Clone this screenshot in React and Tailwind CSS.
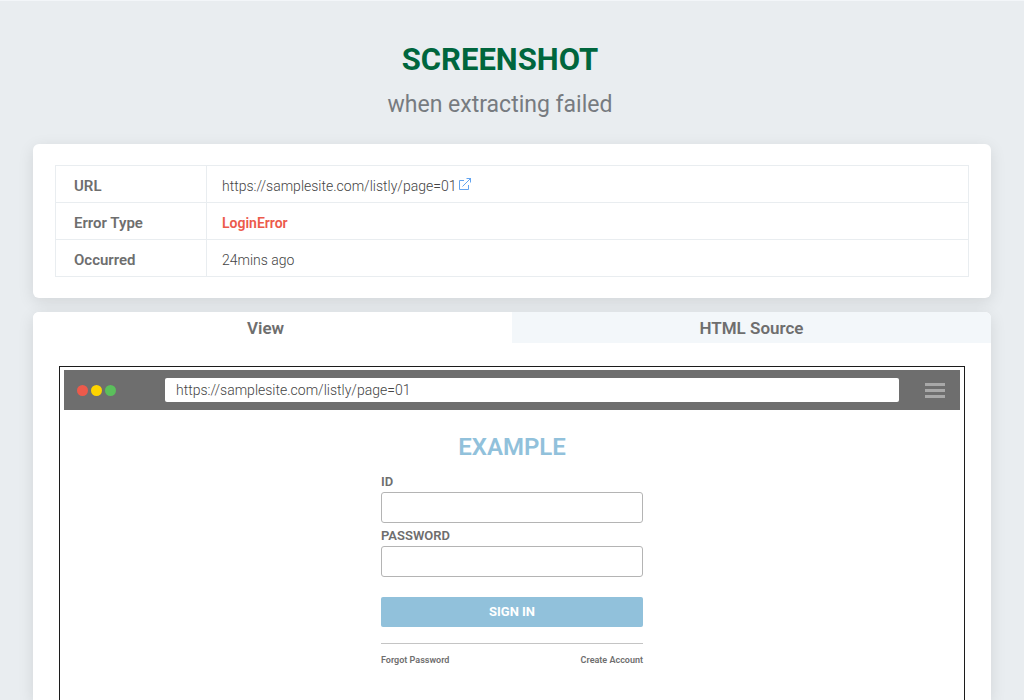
import { useState } from 'react';

const SAMPLE_URL = 'https://samplesite.com/listly/page=01';

function ExternalIcon() {
    return (
        <svg className="w-3.5 h-3.5 mb-1" viewBox="0 0 14 14" fill="none" stroke="#64a5f0" aria-hidden="true">
            <path d="M6 3.5H1.5v9h9V8" />
            <path d="M4.5 9.5L13 1M8.5 1.5h4v4" />
        </svg>
    );
}

function InfoRow({ label, children }) {
    return (
        <tr className="h-[37px]">
            <th scope="row" className="w-[151px] pl-[18px] pt-[3px] text-left text-[15px] leading-5 font-semibold border border-[#e9edf0]">{label}</th>
            <td className="pl-[15px] pt-[3px] border border-[#e9edf0]">{children}</td>
        </tr>
    );
}

function Field({ id, label, type }) {
    return (
        <div className="flex flex-col mb-px">
            <label htmlFor={id} className="h-[22px] pt-px leading-[22px] text-[13px] font-semibold">{label}</label>
            <input id={id} type={type} className="h-[31px] w-full px-2 rounded-[3px] border border-[#b4b4b4] bg-white text-sm" />
        </div>
    );
}

function LoginForm() {
    return (
        <form className="w-[262px] mx-auto" onSubmit={(e) => e.preventDefault()}>
            <h2 className="mt-[21px] mb-[7px] h-8 leading-8 text-2xl font-semibold text-center text-[#91c1db]">EXAMPLE</h2>
            <Field id="login-id" label="ID" type="text" />
            <Field id="login-password" label="PASSWORD" type="password" />
            <button type="submit" className="mt-[19px] w-full h-[30px] rounded-[2px] bg-[#91c1db] text-[13px] font-bold text-white">
                SIGN IN
            </button>
            <div className="mt-4 pt-2 border-t border-[#c4c4c4] flex justify-between text-[9px] leading-4 font-semibold">
                <a href="#forgot">Forgot Password</a>
                <a href="#create">Create Account</a>
            </div>
        </form>
    );
}

function BrowserPreview() {
    return (
        <div className="flex-1 mt-[23px] mx-[26px] px-1 pt-[3px] border-x border-t border-[#1c1c1c]">
            {/* Browser bar */}
            <div className="h-10 px-[13px] bg-[#6e6e6e] flex items-center">
                <div className="flex gap-[3px]">
                    <span className="w-[11px] h-[11px] rounded-full bg-[#ec5a4b]"></span>
                    <span className="w-[11px] h-[11px] rounded-full bg-[#fdd400]"></span>
                    <span className="w-[11px] h-[11px] rounded-full bg-[#5bbf5c]"></span>
                </div>
                <input
                    type="text"
                    readOnly
                    aria-label="Address"
                    value={SAMPLE_URL}
                    className="flex-1 min-w-0 ml-[49px] mr-[26px] h-6 px-[11px] rounded-[2px] bg-white text-sm font-light text-[#444]"
                />
                <button type="button" aria-label="Menu" className="w-5 mr-0.5 flex flex-col gap-[3px]">
                    <span className="h-[3px] bg-[#a8a8a8]"></span>
                    <span className="h-[3px] bg-[#a8a8a8]"></span>
                    <span className="h-[3px] bg-[#a8a8a8]"></span>
                </button>
            </div>
            <LoginForm />
        </div>
    );
}

export default function App() {
    const [tab, setTab] = useState('view');

    return (
        <div className="min-h-screen flex flex-col px-[33px] bg-[#e9edf0] border-t border-[#f3f6f9] text-[#6e6e6e] font-['Roboto',sans-serif]">
            {/* Header */}
            <header className="pt-[41px] pr-6 text-center">
                <h1 className="text-[31px] leading-9 font-bold text-[#00663d]">SCREENSHOT</h1>
                <p className="mt-[11px] text-[23px] leading-8 text-[#777b80]">when extracting failed</p>
            </header>

            {/* Error info */}
            <section className="mt-[23px] px-[22px] py-[21px] rounded-md bg-white shadow-[0_4px_16px_rgba(0,0,0,0.10)]">
                <table className="w-full border-collapse text-sm">
                    <tbody>
                        <InfoRow label="URL">
                            <span className="flex items-center gap-0.5">
                                <span className="font-light text-[#444]">{SAMPLE_URL}</span>
                                <a href={SAMPLE_URL} aria-label="Open page"><ExternalIcon /></a>
                            </span>
                        </InfoRow>
                        <InfoRow label="Error Type">
                            <span className="font-semibold text-[#ec5a4b]">LoginError</span>
                        </InfoRow>
                        <InfoRow label="Occurred">
                            <span className="font-light text-[#444]">24mins ago</span>
                        </InfoRow>
                    </tbody>
                </table>
            </section>

            {/* Captured page */}
            <section className="flex-1 flex flex-col mt-3.5 rounded-t-md bg-white shadow-[0_4px_16px_rgba(0,0,0,0.10)]">
                <div role="tablist" className="grid grid-cols-2 h-[31px] text-[17px] font-semibold">
                    <button
                        type="button"
                        role="tab"
                        aria-selected={tab === 'view'}
                        onClick={() => setTab('view')}
                        className={`pt-0.5 pr-3.5 rounded-tl-md ${tab === 'view' ? 'bg-white' : 'bg-[#f3f7fa]'}`}
                    >
                        View
                    </button>
                    <button
                        type="button"
                        role="tab"
                        aria-selected={tab === 'source'}
                        onClick={() => setTab('source')}
                        className={`pt-0.5 rounded-tr-md ${tab === 'source' ? 'bg-white' : 'bg-[#f3f7fa]'}`}
                    >
                        HTML Source
                    </button>
                </div>
                {tab === 'view' && <BrowserPreview />}
            </section>
        </div>
    );
}
